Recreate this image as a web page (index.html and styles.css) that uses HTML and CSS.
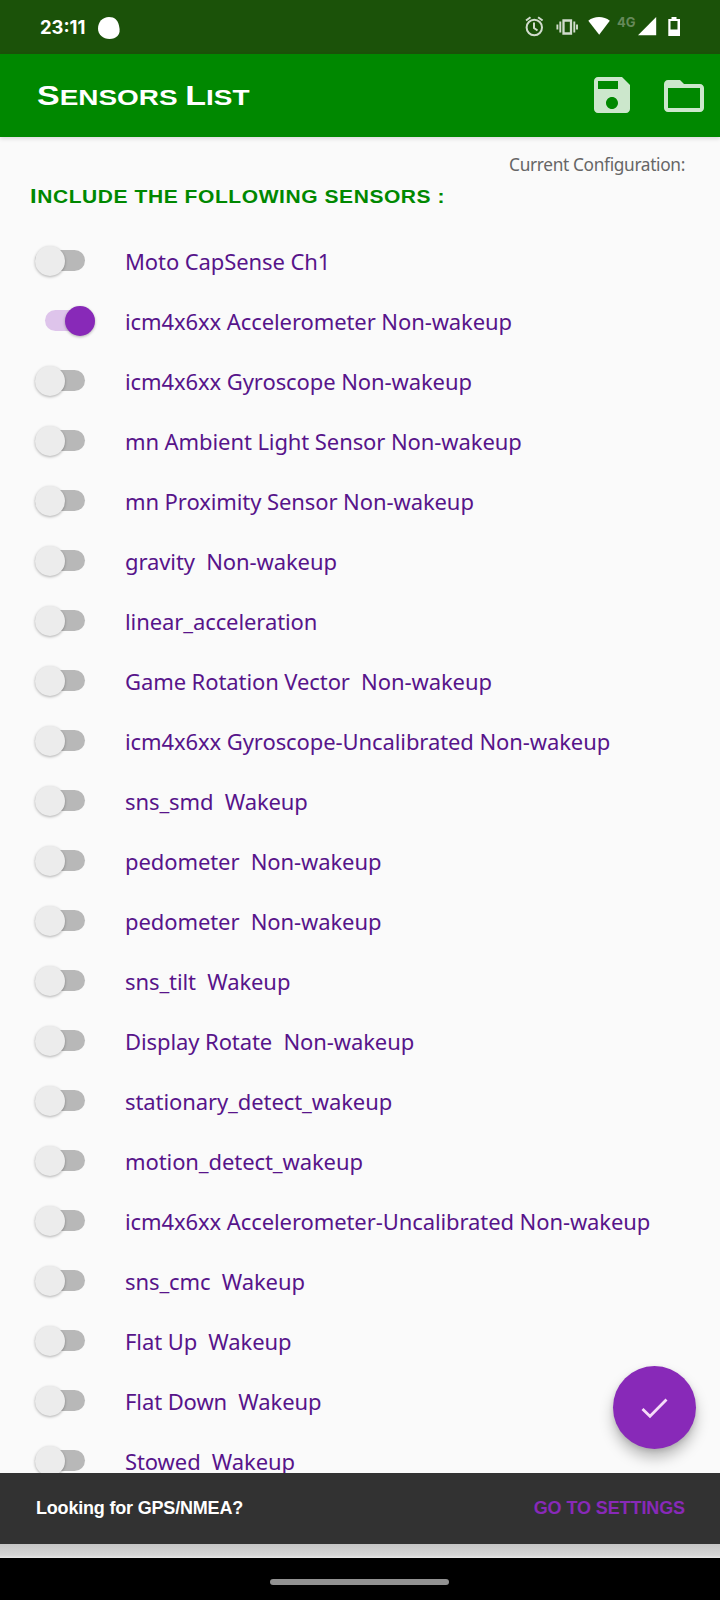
FILE: index.html
```html
<!DOCTYPE html>
<html lang="en">
<head>
<meta charset="utf-8">
<title>Sensors List</title>
<link rel="stylesheet" href="styles.css">
</head>
<body>
<div class="screen">
  <header class="status">
    <span class="clock">23:11</span>
    <svg class="blob" width="24" height="24" viewBox="0 0 24 24"><path d="M12 1C18 1 20.500 4 22 9.500c1.200 5 .8 8-1.500 10.500-2 2-4.500 3-8 3C6 23 1 18.500 1 12.500 1 6 5.500 1 12 1z" fill="#fff"/></svg>
    <svg class="icons" width="170" height="28" viewBox="520 13 170 28">
      <g fill="none" stroke="#d1dccd" stroke-width="2">
        <circle cx="534.300" cy="27.500" r="7.700"/><path d="M534 22.500v5.500l3.500 2.500M526 20.500l4.500-3.300M542.600 20.500l-4.500-3.300"/>
        <path d="M563.500 20.500h7.500v13h-7.500z" stroke-width="2.300"/><path d="M560.300 21.500v11M574.300 21.500v11M557.400 24.500v5M577 24.500v5" stroke-width="1.900"/>
      </g>
      <path d="M588.300 20.700c6-5 15.500-5 21.500 0L599.200 34.800z" fill="#fff"/>
      <text x="617" y="27" class="net">4G</text>
      <path d="M638 35.200L656.200 17v18.200z" fill="#fff"/>
      <path fill-rule="evenodd" d="M671.500 17h5v2h3.500v17h-11.700V19h3.200zM670.500 21v8.500h7V21z" fill="#fff"/>
    </svg>
  </header>
  <div class="appbar">
    <h1><span class="big">S</span>ENSORS <span class="big">L</span>IST</h1>
    <svg class="save" width="36" height="36" viewBox="3 3 18 18" fill="#cce7cc"><path d="M17 3H5c-1.110 0-2 .9-2 2v14c0 1.100.89 2 2 2h14c1.100 0 2-.9 2-2V7l-4-4zm-5 16c-1.660 0-3-1.340-3-3s1.340-3 3-3 3 1.340 3 3-1.340 3-3 3zm3-10H5V5h10v4z"/></svg>
    <svg class="folder" width="40" height="32" viewBox="2 4 20 16" fill="#cce7cc"><path d="M20 6h-8l-2-2H4c-1.100 0-1.990.9-1.990 2L2 18c0 1.100.9 2 2 2h16c1.100 0 2-.9 2-2V8c0-1.100-.9-2-2-2zm0 12H4V8h16v10z"/></svg>
  </div>
  <main>
    <p class="config">Current Configuration:</p>
    <h2><span class="big">I</span>NCLUDE THE FOLLOWING SENSORS :</h2>
    <ul>
      <li><i class="switch"></i><span>Moto CapSense Ch1</span></li>
      <li><i class="switch on"></i><span>icm4x6xx Accelerometer Non-wakeup</span></li>
      <li><i class="switch"></i><span>icm4x6xx Gyroscope Non-wakeup</span></li>
      <li><i class="switch"></i><span>mn Ambient Light Sensor Non-wakeup</span></li>
      <li><i class="switch"></i><span>mn Proximity Sensor Non-wakeup</span></li>
      <li><i class="switch"></i><span>gravity  Non-wakeup</span></li>
      <li><i class="switch"></i><span>linear_acceleration</span></li>
      <li><i class="switch"></i><span>Game Rotation Vector  Non-wakeup</span></li>
      <li><i class="switch"></i><span>icm4x6xx Gyroscope-Uncalibrated Non-wakeup</span></li>
      <li><i class="switch"></i><span>sns_smd  Wakeup</span></li>
      <li><i class="switch"></i><span>pedometer  Non-wakeup</span></li>
      <li><i class="switch"></i><span>pedometer  Non-wakeup</span></li>
      <li><i class="switch"></i><span>sns_tilt  Wakeup</span></li>
      <li><i class="switch"></i><span>Display Rotate  Non-wakeup</span></li>
      <li><i class="switch"></i><span>stationary_detect_wakeup</span></li>
      <li><i class="switch"></i><span>motion_detect_wakeup</span></li>
      <li><i class="switch"></i><span>icm4x6xx Accelerometer-Uncalibrated Non-wakeup</span></li>
      <li><i class="switch"></i><span>sns_cmc  Wakeup</span></li>
      <li><i class="switch"></i><span>Flat Up  Wakeup</span></li>
      <li><i class="switch"></i><span>Flat Down  Wakeup</span></li>
      <li><i class="switch"></i><span>Stowed  Wakeup</span></li>
    </ul>
    <div class="fab"><svg width="30" height="24" viewBox="0 0 30 24"><path d="M2.500 13l7.500 7.300L26.500 3.500" fill="none" stroke="#f5dcf8" stroke-width="2.800"/></svg></div>
  </main>
  <div class="snack"><span class="msg">Looking for GPS/NMEA?</span><span class="action">GO TO SETTINGS</span></div>
  <div class="gap"></div>
  <nav><div class="pill"></div></nav>
</div>
</body>
</html>
```

FILE: styles.css
```css
* { box-sizing: border-box; margin: 0; padding: 0; }
body { background: #fafafa; }
.screen { width: 720px; height: 1600px; display: flex; flex-direction: column; overflow: hidden; font-family: "Noto Sans", "Open Sans", sans-serif; }
.status { height: 54px; flex: none; background: #1b5209; display: flex; align-items: center; padding: 0 30px 0 40px; }
.clock { font: bold 18.400px/54px Inter, sans-serif; color: #fff; width: 57px; white-space: nowrap; }
.blob { display: block; margin-top: 1px; }
.icons { margin-left: auto; display: block; }
.net { font: bold 13px Inter, sans-serif; fill: #66895a; }
.appbar { height: 83px; flex: none; background: #008800; display: flex; align-items: center; padding: 0 16px 0 37px; position: relative; z-index: 1; box-shadow: 0 2px 4px rgba(0,0,0,.12); }
h1, h2 { font-family: "Liberation Sans", sans-serif; font-weight: bold; white-space: nowrap; transform-origin: left center; }
h1 { font-size: 22.600px; line-height: 40px; color: #fff; margin: 2px auto 0 0; transform: scaleX(1.235); }
h1 .big { font-size: 27.500px; }
.save { margin-bottom: 2px; }
.folder { margin-left: 34px; }
main { flex: 1; min-height: 0; overflow: hidden; position: relative; background: #fafafa; }
.config { margin: 14px 35px 0 0; height: 28px; line-height: 27px; font-size: 17.300px; letter-spacing: -.34px; color: #666; text-align: right; white-space: nowrap; }
h2 { font-size: 18.600px; line-height: 34px; height: 34px; color: #008800; margin-left: 30px; letter-spacing: .5px; transform: scaleX(1.13); }
h2 .big { font-size: 21px; }
ul { list-style: none; margin-top: 18px; }
li { height: 60px; display: flex; align-items: center; padding-left: 35px; font-size: 22px; letter-spacing: -.09px; color: #57148a; white-space: pre; }
li span { line-height: 30px; }
.switch { width: 50px; height: 30px; margin-right: 40px; flex: none; position: relative; }
.switch::before { content: ""; display: block; margin-top: 4px; width: 50px; height: 21px; border-radius: 11px; background: #b8b8b8; }
.switch::after { content: ""; position: absolute; left: 0; top: 0; width: 30px; height: 30px; border-radius: 50%; background: #ececec; box-shadow: 0 1px 3px rgba(0,0,0,.3); }
.switch.on { margin-left: 10px; margin-right: 30px; }
.switch.on::before { background: #dec4eb; }
.switch.on::after { left: 20px; background: #8829b8; }
.fab { position: absolute; right: 24px; bottom: 24px; width: 83px; height: 83px; border-radius: 50%; background: #8829b8; display: flex; align-items: center; justify-content: center; box-shadow: 0 9px 14px rgba(0,0,0,.25), 0 2px 5px rgba(0,0,0,.12); }
.snack { height: 71px; flex: none; background: #323232; display: flex; align-items: center; justify-content: space-between; padding: 0 35px 2px 36px; font: bold 18px/24px "Liberation Sans", sans-serif; letter-spacing: -.19px; color: #fff; }
.action { color: #8829b8; letter-spacing: -.1px; }
.gap { height: 14px; flex: none; background: linear-gradient(#c5c5c5, #d5d5d5 80%, #e8e8e8); }
nav { height: 42px; flex: none; background: #000; display: flex; justify-content: center; padding: 21px 1px 0 0; }
.pill { width: 179px; height: 6px; border-radius: 3px; background: #919191; }
```
